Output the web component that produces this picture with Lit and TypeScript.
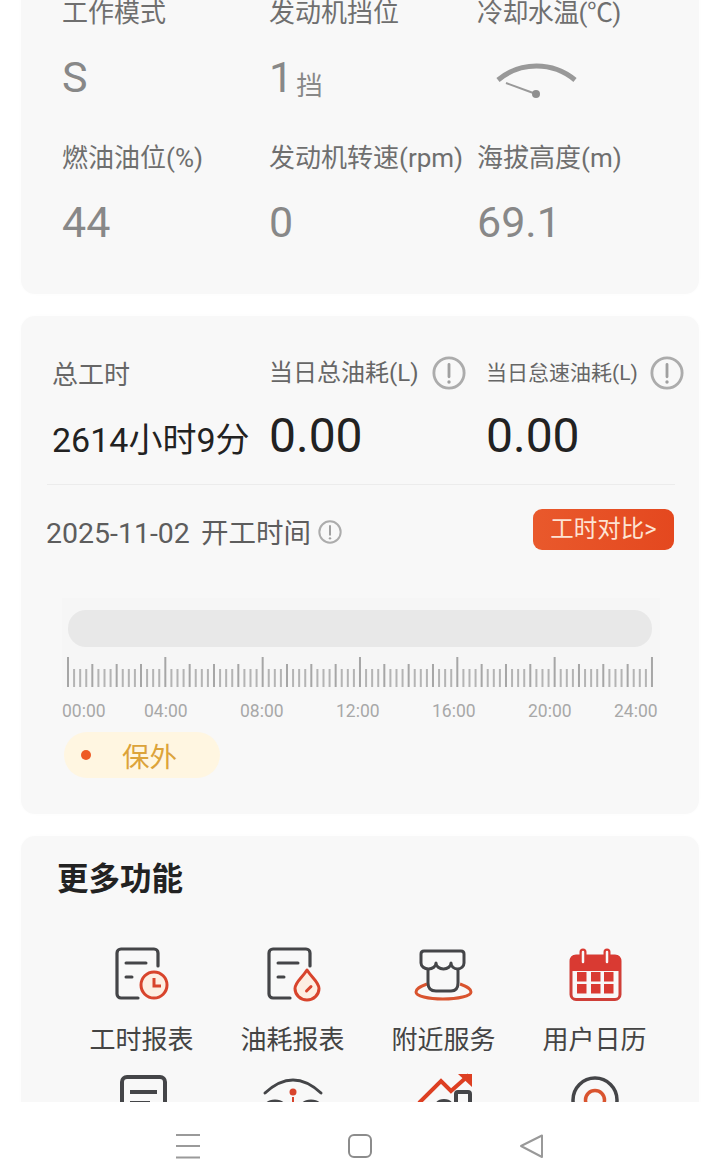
import { LitElement, html, css, svg } from "lit";
import { customElement } from "lit/decorators.js";

const DARK = "#444548";
const RED = "#d8442c";

const doc = (x: number) => svg`<path d="M${x + 21} 52H${x + 4}a4 4 0 0 1-4-4V7a4 4 0 0 1 4-4H${x + 37}a4 4 0 0 1 4 4V20" fill="none" stroke="${DARK}" stroke-width="3.2" stroke-linecap="round"/>
<path d="M${x + 9} 17H${x + 29}M${x + 9} 31H${x + 15}" fill="none" stroke="${DARK}" stroke-width="3" stroke-linecap="round"/>`;

const icons = [
  svg`${doc(5)}<circle cx="42" cy="39" r="13" fill="#fdeee2" stroke="${RED}" stroke-width="3"/><path d="M42 32V40H49" fill="none" stroke="${RED}" stroke-width="3"/>`,
  svg`${doc(6)}<path d="M44 24C49 32 56 36 56 42.500a12 11.500 0 0 1-24 0C32 36 39 32 44 24Z" fill="#fdeee2" stroke="${RED}" stroke-width="3" stroke-linejoin="round"/><path d="M43.500 45L48 40.500" stroke="${RED}" stroke-width="3" stroke-linecap="round"/>`,
  svg`<path d="M13 38C5 41 2 43 2 46C2 50 14 53 29 53C44 53 57 50 57 46C57 43 54 41 46 38" fill="none" stroke="#d9542f" stroke-width="3"/>
  <path d="M10 5H47Q50 5 50 8V17A6.500 6 0 0 1 37 17A7.500 6 0 0 1 22 17A7.500 6 0 0 1 7 17V8Q7 5 10 5Z" fill="#f8f8f8" stroke="${DARK}" stroke-width="3" stroke-linejoin="round"/>
  <path d="M14 24V37Q14 45 22 45H37Q44 45 44 37V24" fill="none" stroke="${DARK}" stroke-width="3" stroke-linecap="round"/>`,
  svg`<rect x="6" y="10" width="49" height="43.500" rx="5" fill="#f8f8f8" stroke="#cf3f38" stroke-width="3"/><path d="M5 25V14a5 5 0 0 1 5-5H51a5 5 0 0 1 5 5V25Z" fill="#d93a32"/>
  <path d="M18 6V16M42 6V16" stroke="#d93a32" stroke-width="7" stroke-linecap="round"/><path d="M18 6V16M42 6V16" stroke="#f8f8f8" stroke-width="2.500" stroke-linecap="round"/>
  ${[12, 26, 39].flatMap((x) => [26, 38].map((y) => svg`<rect x="${x}" y="${y}" width="9.500" height="9.500" fill="#d93a32"/>`))}`,
  svg`<path d="M10 36V8a5 5 0 0 1 5-5H48a5 5 0 0 1 5 5V36" fill="none" stroke="${DARK}" stroke-width="4"/><path d="M18 18H45M18 29H38" stroke="${DARK}" stroke-width="4"/>`,
  svg`<path d="M2 19Q30-7 58 19" fill="none" stroke="${DARK}" stroke-width="3" stroke-linecap="round"/><circle cx="30" cy="18" r="3.500" fill="${RED}"/><path d="M30 23V29" stroke="${RED}" stroke-width="2"/><path d="M3 34Q3 27 12 27T21 34M39 34Q39 27 48 27T57 34" fill="none" stroke="${DARK}" stroke-width="3"/>`,
  svg`<path d="M5 29L27 7L37 17L55 1" fill="none" stroke="#dd3f22" stroke-width="4"/><path d="M44 0H58V13Z" fill="#dd3f22"/><path d="M22 36Q22 27 30 27T38 36M42 34V20a2 2 0 0 1 2-2H54a2 2 0 0 1 2 2V34" fill="none" stroke="${DARK}" stroke-width="4"/>`,
  svg`<circle cx="30" cy="26" r="22" fill="none" stroke="${DARK}" stroke-width="3.500"/><circle cx="30" cy="26" r="9.500" fill="none" stroke="#d9542f" stroke-width="3.500"/>`,
];

const menu = ["工时报表", "油耗报表", "附近服务", "用户日历", "", "", "", ""];
const times: [string, number][] = [["00:00", 82], ["04:00", 96], ["08:00", 96], ["12:00", 96], ["16:00", 96], ["20:00", 86], ["24:00", 44]];
const ticks = Array.from({ length: 97 }, (_, i) => i);

@customElement("app-root")
export class AppRoot extends LitElement {
  static styles = css`
    :host { display: block; width: 716px; height: 1168px; background: #fff; overflow: hidden; font-family: Roboto, "Noto Sans CJK SC", sans-serif; }
    .page { height: 1168px; display: flex; flex-direction: column; }
    .scroll { height: 1102px; overflow: hidden; padding: 0 17px 0 21px; box-sizing: border-box; width: 716px; flex: none; }
    .card { background: #f8f8f8; border-radius: 14px; box-shadow: 0 0 4px rgba(0,0,0,.015); }
    .status { margin-top: -40px; padding: 35px 0 44px 41px; display: grid; grid-template-columns: 207px 208px 200px; row-gap: 35px; }
    .s-label { font-size: 26px; line-height: 36px; color: #6f6f6f; white-space: nowrap; }
    .s-label.n { letter-spacing: -.6px; }
    .s-value { margin-top: 18px; height: 56px; font-size: 43px; line-height: 56px; color: #888; display: flex; align-items: baseline; }
    .s-unit { font-size: 26.500px; margin-left: 3px; transform: translateY(3px); }
    .gauge { display: block; width: 110px; height: 50px; margin-top: 24px; }
    .hours { margin-top: 22px; padding: 38px 0 36px; }
    .top { display: grid; grid-template-columns: 217px 217px 200px; padding-left: 31px; }
    .h-label { display: flex; align-items: center; height: 36px; font-size: 26px; color: #666; white-space: nowrap; }
    .h-label.m { font-size: 24px; gap: 13px; }
    .h-label.s { font-size: 21px; gap: 12px; }
    .h-label.m span, .h-label.s span { margin-top: -3px; }
    .h-label svg { width: 34px; height: 34px; flex: none; margin-top: 1px; }
    .h-val { margin-top: 16px; height: 61px; line-height: 60px; font-size: 48px; color: #222; white-space: nowrap; }
    .h-val.t { font-size: 34px; margin-top: 23px; height: 54px; line-height: 55px; }
    .divider { height: 1px; background: #ececec; margin: 17px 24px 0 26px; }
    .date-row { margin-top: 24px; padding: 0 25px; display: flex; align-items: center; height: 41px; }
    .date { display: flex; align-items: baseline; gap: 11px; margin-top: 3px; font-size: 27.500px; color: #5d5d5d; white-space: nowrap; }
    .date b { font-weight: 400; font-size: 28.500px; }
    .small-info { width: 24px; height: 24px; margin: 5px 0 0 7px; flex: none; }
    .btn { margin-left: auto; width: 141px; height: 41px; border-radius: 9px; background: linear-gradient(90deg, #e9592c, #e4481f); color: #fde3d3; font-size: 23.500px; line-height: 41px; text-align: center; white-space: nowrap; }
    .chart { margin: 48px 0 0 41px; width: 598px; height: 92px; box-sizing: border-box; padding: 12px 8px 0 5px; background: #f6f6f6; }
    .bar { height: 37px; margin-left: 1px; border-radius: 18px; background: #e8e8e8; }
    .ticks { display: block; margin-top: 10px; width: 590px; height: 31px; }
    .times { margin: 9px 0 0 41px; display: grid; grid-template-columns: ${css([times.map((t) => t[1] + "px").join(" ")] as any)}; font-size: 17.500px; line-height: 24px; color: #a8a8a8; white-space: nowrap; }
    .chip { margin: 9px 0 0 43px; width: 156px; height: 46px; border-radius: 23px; background: #fff6e1; display: flex; align-items: center; box-sizing: border-box; padding-left: 17px; color: #dca33a; font-size: 27.500px; }
    .dot { width: 10px; height: 10px; border-radius: 50%; background: #ee5a24; margin-right: 31px; }
    .more { margin-top: 22px; padding: 20px 0 0 45px; height: 400px; }
    .title { margin-left: -9px; margin-top: 2px; font-size: 31.500px; font-weight: 700; line-height: 44px; color: #222; }
    .grid { margin-top: 44px; display: grid; grid-template-columns: repeat(4, 151px); row-gap: 16px; }
    .tile { display: flex; flex-direction: column; align-items: center; }
    .tile svg { width: 60px; height: 60px; display: block; overflow: visible; }
    .tile span { margin-top: 16px; height: 36px; font-size: 26px; line-height: 36px; color: #444; white-space: nowrap; }
    nav { flex: 1; background: #fff; display: flex; align-items: center; position: relative; z-index: 1; padding: 22px 0 0 175px; }
    nav svg { display: block; flex: none; }
    .nav-home { margin-left: 146px; }
    .nav-back { margin-left: 145px; }
  `;

  private info(size: string) {
    return html`<svg class="${size}" viewBox="0 0 36 36"><circle cx="18" cy="18" r="16" fill="none" stroke="#acacac" stroke-width="3"/><path d="M18 9V22" stroke="#a0a0a0" stroke-width="3" stroke-linecap="round"/><circle cx="18" cy="27.500" r="1.800" fill="#a0a0a0"/></svg>`;
  }

  render() {
    return html`<div class="page">
      <div class="scroll">
        <section class="card status">
          <div><div class="s-label">工作模式</div><div class="s-value">S</div></div>
          <div><div class="s-label">发动机挡位</div><div class="s-value">1<span class="s-unit">挡</span></div></div>
          <div><div class="s-label n">冷却水温(℃)</div>
            <svg class="gauge" viewBox="0 0 110 50">
              <path d="M21 25A60 60 0 0 1 98 25" fill="none" stroke="#999" stroke-width="5"/>
              <path d="M29 28L59 39" stroke="#999" stroke-width="2"/><circle cx="59" cy="39" r="4" fill="#8f8f8f"/>
            </svg></div>
          <div><div class="s-label">燃油油位(%)</div><div class="s-value">44</div></div>
          <div><div class="s-label">发动机转速(rpm)</div><div class="s-value">0</div></div>
          <div><div class="s-label">海拔高度(m)</div><div class="s-value">69.1</div></div>
        </section>

        <section class="card hours">
          <div class="top">
            <div><div class="h-label">总工时</div><div class="h-val t">2614小时9分</div></div>
            <div><div class="h-label m"><span>当日总油耗(L)</span>${this.info("")}</div><div class="h-val">0.00</div></div>
            <div><div class="h-label s"><span>当日怠速油耗(L)</span>${this.info("")}</div><div class="h-val">0.00</div></div>
          </div>
          <div class="divider"></div>
          <div class="date-row">
            <span class="date"><b>2025-11-02</b><span>开工时间</span></span>${this.info("small-info")}
            <div class="btn">工时对比&gt;</div>
          </div>
          <div class="chart">
            <div class="bar"></div>
            <svg class="ticks" viewBox="0 0 590 31">
              ${ticks.map((i) => {
                const y = i % 16 === 0 ? 0 : i % 4 === 0 ? 7 : 12;
                const x = (i * 6.083).toFixed(2);
                return svg`<rect x="${x}" y="${y}" width="2" height="${30 - y}" fill="${i % 4 === 0 ? "#a6a6a6" : "#b4b4b4"}"/>`;
              })}
            </svg>
          </div>
          <div class="times">${times.map((t) => html`<span>${t[0]}</span>`)}</div>
          <div class="chip"><i class="dot"></i>保外</div>
        </section>

        <section class="card more">
          <div class="title">更多功能</div>
          <div class="grid">
            ${menu.map((m, i) => html`<div class="tile"><svg viewBox="0 0 60 60">${icons[i]}</svg><span>${m}</span></div>`)}
          </div>
        </section>
      </div>
      <nav>
        <svg width="26" height="26" viewBox="0 0 26 26"><path d="M1 2H25M1 13H25M1 24.500H25" stroke="#9a9a9a" stroke-width="2"/></svg>
        <svg class="nav-home" width="26" height="26" viewBox="0 0 26 26"><rect x="2" y="2" width="22" height="22" rx="5" fill="none" stroke="#8c8c8c" stroke-width="2"/></svg>
        <svg class="nav-back" width="28" height="26" viewBox="0 0 28 26"><path d="M3 13L24 2.500V24Z" fill="none" stroke="#999" stroke-width="2" stroke-linejoin="round"/></svg>
      </nav>
    </div>`;
  }
}
